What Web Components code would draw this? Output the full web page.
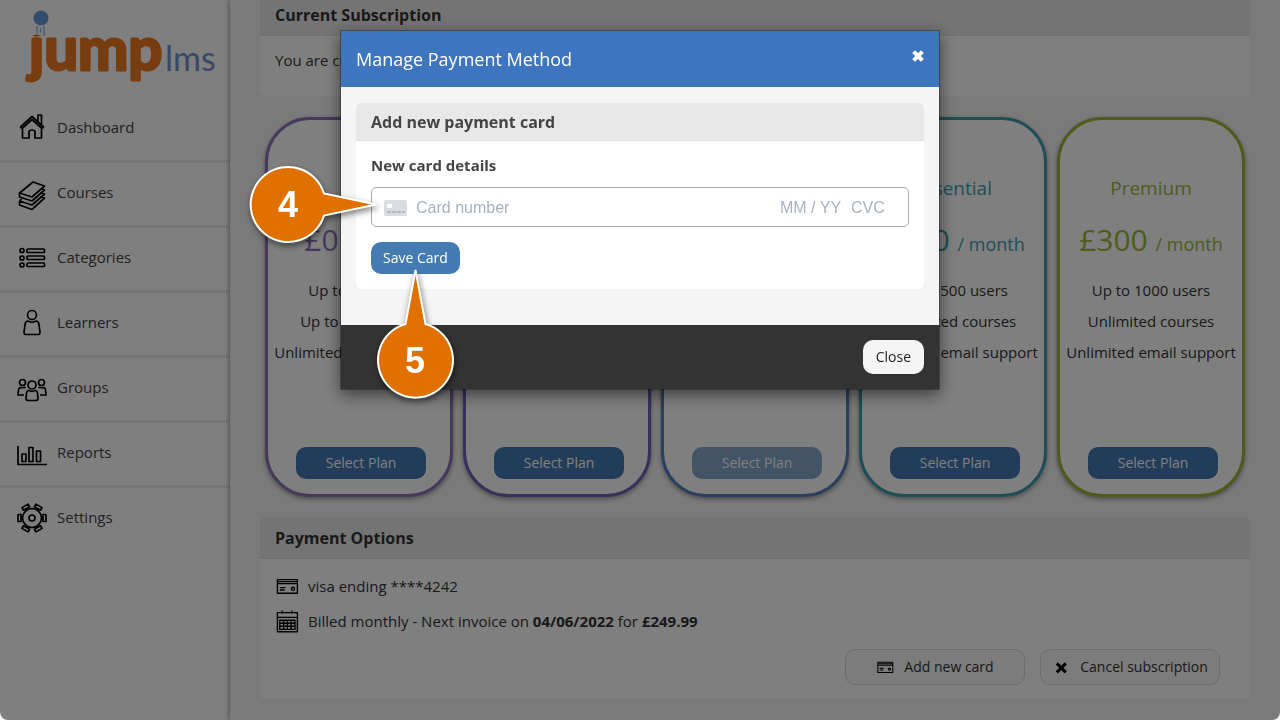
<!DOCTYPE html>
<html lang="en">
    <head>
        <meta charset="UTF-8">
        <meta name="viewport" content="width=device-width, initial-scale=1">
        <title>Manage Payment Method</title>
        <style>
            body {
                margin: 0;
                background: #f5f5f5;
                color: #333;
                font: 15px/20px "Open Sans", "Noto Sans", sans-serif;
            }
            .page { display: flex; height: 100vh; overflow: hidden; }
            main {
                flex: 1;
                min-width: 0;
                padding: 0 30px 20px;
                box-shadow: 0 0 6px rgba(0, 0, 0, .5);
            }
            /* page is scrolled down a little */
            .current { margin-top: -6px; }
            .note { margin: 0; padding: 5px 0 16px; }
            .plans {
                display: grid;
                grid-template-columns: repeat(5, 1fr);
                gap: 10px;
                padding: 21px 5px 20px;
            }
            .row { display: flex; align-items: center; gap: 9px; height: 35px; }
            .actions { display: flex; justify-content: flex-end; gap: 15px; padding: 11px 15px 4px; }
        </style>
    </head>
    <body>

        <div class="page">
            <side-nav>
                <nav-item icon="home">Dashboard</nav-item>
                <nav-item icon="books">Courses</nav-item>
                <nav-item icon="list">Categories</nav-item>
                <nav-item icon="person">Learners</nav-item>
                <nav-item icon="group">Groups</nav-item>
                <nav-item icon="chart">Reports</nav-item>
                <nav-item icon="gear">Settings</nav-item>
            </side-nav>

            <main>
                <panel-box class="current">
                    <span slot="title">Current Subscription</span>
                    <p class="note">You are currently</p>
                </panel-box>

                <div class="plans">
                    <plan-card price="£0" style="--plan: #8e72b8">
                        <span slot="name">Free</span>
                        <li>Up to 10 users</li>
                        <li>Up to 10 courses</li>
                        <li>Unlimited email support</li>
                    </plan-card>
                    <plan-card style="--plan: #6c66b4"></plan-card>
                    <plan-card style="--plan: #5580bb" disabled></plan-card>
                    <plan-card price="£200" style="--plan: #3f9cae">
                        <span slot="name">Essential</span>
                        <li>Up to 500 users</li>
                        <li>Unlimited courses</li>
                        <li>Unlimited email support</li>
                    </plan-card>
                    <plan-card price="£300" style="--plan: #9db636">
                        <span slot="name">Premium</span>
                        <li>Up to 1000 users</li>
                        <li>Unlimited courses</li>
                        <li>Unlimited email support</li>
                    </plan-card>
                </div>

                <panel-box>
                    <span slot="title">Payment Options</span>
                    <div class="row"><line-icon name="card"></line-icon>visa ending ****4242</div>
                    <div class="row"><line-icon name="calendar"></line-icon><span>Billed monthly - Next invoice on <b>04/06/2022</b> for <b>£249.99</b></span></div>
                    <div class="actions">
                        <app-button kind="outline"><line-icon name="card" style="--size: 18px"></line-icon>Add new card</app-button>
                        <app-button kind="outline"><line-icon name="cross" style="--size: 18px"></line-icon>Cancel subscription</app-button>
                    </div>
                </panel-box>
            </main>
        </div>

        <payment-modal>
            <span slot="title">Manage Payment Method</span>
            <panel-box compact>
                <span slot="title">Add new payment card</span>
                <card-form></card-form>
            </panel-box>
            <app-button slot="footer" kind="light">Close</app-button>
            <step-callout slot="callout" point="right" style="left: -94px; top: 132px">4</step-callout>
            <step-callout slot="callout" point="up" style="left: 33px; top: 236px">5</step-callout>
        </payment-modal>

        <template id="logo-template">
            <style>
                :host { display: block; }
                svg { display: block; }
                text { font-family: Lato, "Open Sans", sans-serif; }
            </style>
            <svg width="230" height="98" viewBox="0 0 230 98" role="img" aria-label="jump lms">
                <!-- the ball stands in for the dot of the j -->
                <defs><clipPath id="below"><rect x="0" y="35" width="230" height="63"/></clipPath></defs>
                <circle cx="41" cy="18" r="7.500" fill="#669be0"/>
                <path d="M37 26v10M40.500 28v5M44 26v10" stroke="#86aadc" stroke-width="1.200"/>
                <text x="29" y="70" font-size="60" font-weight="700" fill="#ee7a20" stroke="#ee7a20" stroke-width="3" stroke-linejoin="round" clip-path="url(#below)">jump</text>
                <text x="165" y="71" font-size="34" fill="#7090cc">lms</text>
            </svg>
        </template>

        <template id="nav-template">
            <style>
                :host {
                    display: block;
                    flex: none;
                    width: 230px;
                    background: #fff;
                }
            </style>
            <jump-logo></jump-logo>
            <nav><slot></slot></nav>
        </template>

        <template id="nav-item-template">
            <style>
                :host { display: block; border-bottom: 3px solid #ededed; }
                :host(:last-child) { border-bottom: 0; }
                a {
                    display: flex;
                    align-items: center;
                    gap: 10px;
                    box-sizing: border-box;
                    height: 62px;
                    padding: 0 0 4px 17px;
                    color: #444;
                    text-decoration: none;
                }
                line-icon { --size: 30px; }
            </style>
            <a href="#"><line-icon></line-icon><slot></slot></a>
        </template>

        <template id="panel-template">
            <style>
                :host { display: block; }
                h2 {
                    margin: 0;
                    padding: 11px 15px 10px;
                    background: #e8e8e8;
                    border-bottom: 1px solid #e0e0e0;
                    border-radius: 6px 6px 0 0;
                    font-size: 16px;
                    line-height: 20px;
                    font-weight: 700;
                }
                .body { padding: 9px 15px 10px; background: #fff; border-radius: 0 0 6px 6px; }
                :host([compact]) h2 { padding: 9px 15px 8px; color: #444; }
                :host([compact]) .body { padding: 14px 15px 15px; }
            </style>
            <h2><slot name="title"></slot></h2>
            <div class="body"><slot></slot></div>
        </template>

        <template id="plan-template">
            <style>
                :host {
                    display: flex;
                    flex-direction: column;
                    align-items: center;
                    box-sizing: border-box;
                    min-height: 380px;
                    padding: 56px 0 15px;
                    border: 3px solid var(--plan);
                    border-radius: 45px;
                    background: #fff;
                    box-shadow: 0 2px 5px rgba(0, 0, 0, .4);
                    text-align: center;
                    white-space: nowrap;
                }
                h3 { margin: 0 0 18px; font-size: 19px; line-height: 24px; font-weight: 400; color: var(--plan); }
                .price { margin-bottom: 13px; font-size: 30px; line-height: 44px; color: var(--plan); }
                .price small { font-size: 18px; line-height: 20px; }
                ul { margin: 0; padding: 0; list-style: none; line-height: 31px; }
                app-button { margin: auto 0 0 4px; }
            </style>
            <h3><slot name="name"></slot></h3>
            <div class="price"></div>
            <ul><slot></slot></ul>
            <app-button kind="plan">Select Plan</app-button>
        </template>

        <template id="button-template">
            <style>
                :host { display: inline-block; }
                button {
                    display: flex;
                    align-items: center;
                    justify-content: center;
                    gap: 10px;
                    height: 32px;
                    margin: 0;
                    padding: 0 12px;
                    border: 0;
                    border-radius: 10px;
                    background: #457bb3;
                    color: #fff;
                    font: inherit;
                    font-size: 14px;
                    white-space: nowrap;
                    cursor: pointer;
                }
                :host([kind="plan"]) button { width: 130px; }
                :host([kind="outline"]) button {
                    width: 180px;
                    height: 36px;
                    border: 1px solid #d8d8d8;
                    background: #f9f9f9;
                    color: #333;
                }
                :host([kind="light"]) button { height: 34px; padding: 0 13px; background: #f5f5f5; color: #222; }
                button:disabled { opacity: .65; }
            </style>
            <button type="button"><slot></slot></button>
        </template>

        <template id="form-template">
            <style>
                :host { display: block; }
                label { display: block; margin-bottom: 12px; color: #444; font-weight: 700; }
                .field {
                    display: flex;
                    align-items: center;
                    box-sizing: border-box;
                    height: 40px;
                    margin-bottom: 15px;
                    padding: 2px 12px 0;
                    border: 1px solid #aaa;
                    border-radius: 5px;
                }
                svg { flex: none; margin-right: 9px; }
                input {
                    min-width: 0;
                    padding: 0;
                    border: 0;
                    outline: 0;
                    background: none;
                    color: #333;
                    font: 16px/20px "Liberation Sans", Arial, sans-serif;
                }
                input::placeholder { color: #a9b3bd; opacity: 1; }
                .number { flex: 1; }
                .date { width: 71px; }
                .cvc { width: 45px; }
            </style>
            <label for="number">New card details</label>
            <div class="field">
                <svg width="23" height="16" viewBox="0 0 23 16" aria-hidden="true">
                    <rect width="23" height="16" rx="2" fill="#d9dce0"/>
                    <rect x="3" y="4" width="5" height="4" rx="1" fill="#fff"/>
                    <path d="M3 12h4M8 12h4M13 12h4M18 12h3" stroke="#b3b9c0" stroke-width="2"/>
                </svg>
                <input class="number" id="number" placeholder="Card number">
                <input class="date" aria-label="Expiry date" placeholder="MM / YY">
                <input class="cvc" aria-label="CVC" placeholder="CVC">
            </div>
            <app-button>Save Card</app-button>
        </template>

        <template id="modal-template">
            <style>
                :host {
                    position: fixed;
                    inset: 0;
                    padding: 30px 20px;
                    background: rgba(0, 0, 0, .5);
                    border-radius: 0 0 8px 8px;
                }
                .dialog {
                    position: relative;
                    box-sizing: border-box;
                    max-width: 600px;
                    margin: 0 auto;
                    border: 1px solid rgba(0, 0, 0, .3);
                    background: #f5f5f5;
                    background-clip: padding-box;
                    box-shadow: 0 5px 15px rgba(0, 0, 0, .5);
                }
                header {
                    display: flex;
                    justify-content: space-between;
                    padding: 15px;
                    background: #3d75bf;
                    color: #fff;
                }
                h1 { margin: 0; font-size: 18px; line-height: 26px; font-weight: 400; }
                header button { display: block; width: 12px; height: 20px; margin: 0; padding: 0; border: 0; background: none; cursor: pointer; }
                header svg { display: block; }
                .body { padding: 16px 15px 36px; }
                footer { display: flex; justify-content: flex-end; padding: 15px; background: #333; }
            </style>
            <div class="dialog" role="dialog" aria-modal="true">
                <header>
                    <h1><slot name="title"></slot></h1>
                    <button type="button" aria-label="Close"><svg width="12" height="20" viewBox="0 0 12 20"><path d="M3 7l6 6M9 7l-6 6" stroke="#fff" stroke-width="4" stroke-linecap="square"/></svg></button>
                </header>
                <div class="body"><slot></slot></div>
                <footer><slot name="footer"></slot></footer>
                <slot name="callout"></slot>
            </div>
        </template>

        <script>
            // line icons, 30x30 grid
            const ICONS = {
                home: '<path d="M3.500 15L15 4.500 26.500 15l-1.500 1.500L15 7.500 5 16.500z"/><path d="M5.500 16.500V26H12v-6q0-2 3-2t3 2v6h6.500v-9.500M21 9.500V3h3.500v9.500"/>',
                books: '<path d="M2.500 16L16 5l11.500 4L15 20z"/><path d="M2.500 16v4L15 24l12.500-11-3-1M2.500 24L15 28l12.500-11-3-1M2.500 24v4L15 32.500 27.500 21l-3-1M2.500 24l2-2"/>',
                list: '<circle cx="5" cy="8.500" r="2"/><circle cx="5" cy="16" r="2"/><circle cx="5" cy="23" r="2"/><rect x="10" y="7" width="17.500" height="3.500" rx="1"/><rect x="10" y="14" width="17.500" height="3.500" rx="1"/><rect x="10" y="21" width="17.500" height="3.500" rx="1"/>',
                person: '<circle cx="15" cy="8" r="4.500"/><path d="M11 14q4 2.500 8 0 3 .5 3 4l1 7q0 2.500-2 2.500H9q-2 0-2-2.500l1-7q0-3.500 3-4z"/>',
                group: '<g transform="translate(0 3)"><circle cx="15" cy="10" r="4"/><path d="M11.500 15.500q3.500 1.500 7 0 2 .5 2 3l.5 5q0 2-2 2h-8q-2 0-2-2l.5-5q0-2.500 2-3z"/><circle cx="5.500" cy="7.500" r="3"/><circle cx="24.500" cy="7.500" r="3"/><path d="M8.500 13q-1-1-2-.5-1.500.5-3 0Q2 12.500 1.500 15L1 20h6M21.500 13q1-1 2-.5 1.500.5 3 0 1.500 0 2 2.500l.5 5h-6"/></g>',
                chart: '<path d="M1 9v18.500h29M5 17h4v7.500H5zM12 10.500h4v14h-4zM19.500 14h4v10.500h-4z"/>',
                gear: '<g transform="translate(0 1)"><circle cx="15" cy="15" r="9.500"/><circle cx="15" cy="15" r="3"/><path d="M1 11.500h3v7H1zM26 11.500h3v7h-3z"/><path d="M1 11.500h3v7H1zM26 11.500h3v7h-3z" transform="rotate(60 15 15)"/><path d="M1 11.500h3v7H1zM26 11.500h3v7h-3z" transform="rotate(120 15 15)"/></g>',
                card: '<path d="M3 7h25v17H3zM3 12h25M3 9.500h25M6 17h7M6 20h6"/><circle cx="22.500" cy="18.500" r="2"/>',
                calendar: '<path d="M3 4.500h25v24H3zM3 10.500h25M9 2v4M21 2v4M6 14h19v11.500H6zM6 17.800h19M6 21.600h19M10.800 14v11.500M15.500 14v11.500M20.200 14v11.500"/>',
                cross: '<path d="M8 9l15 15M23 9L8 24" stroke-width="5"/>'
            };

            // clone a template into an open shadow root
            function render(el, id) {
                const root = el.attachShadow({mode : 'open'});
                root.append(document.getElementById(id).content.cloneNode(true));
                return root;
            }

            class LineIcon extends HTMLElement {
                connectedCallback() {
                    const root = this.shadowRoot || this.attachShadow({mode : 'open'});
                    root.innerHTML = `
                        <style>
                            :host { display: block; flex: none; width: var(--size, 24px); height: var(--size, 24px); }
                            svg { display: block; width: 100%; height: 100%; overflow: visible; }
                        </style>
                        <svg viewBox="0 0 30 30" fill="none" stroke="#000" stroke-width="1.700" stroke-linejoin="round" aria-hidden="true">${ICONS[this.getAttribute('name')] || ''}</svg>
                    `;
                }
            }

            class JumpLogo extends HTMLElement {
                constructor() {
                    super();
                    render(this, 'logo-template');
                }
            }

            class SideNav extends HTMLElement {
                constructor() {
                    super();
                    render(this, 'nav-template');
                }
            }

            class NavItem extends HTMLElement {
                connectedCallback() {
                    const root = render(this, 'nav-item-template');
                    const icon = document.createElement('line-icon');
                    icon.setAttribute('name', this.getAttribute('icon'));
                    root.querySelector('line-icon').replaceWith(icon);
                }
            }

            class PanelBox extends HTMLElement {
                constructor() {
                    super();
                    render(this, 'panel-template');
                }
            }

            class AppButton extends HTMLElement {
                connectedCallback() {
                    if (this.shadowRoot) return;
                    const root = render(this, 'button-template');
                    root.querySelector('button').disabled = this.hasAttribute('disabled');
                }
            }

            class PlanCard extends HTMLElement {
                connectedCallback() {
                    const root = render(this, 'plan-template');
                    const price = this.getAttribute('price');
                    if (price) {
                        root.querySelector('.price').innerHTML = `${price} <small>/ month</small>`;
                    }
                    if (this.hasAttribute('disabled')) {
                        const button = root.querySelector('app-button');
                        button.setAttribute('disabled', '');
                        if (button.shadowRoot) button.shadowRoot.querySelector('button').disabled = true;
                    }
                }
            }

            class CardForm extends HTMLElement {
                constructor() {
                    super();
                    render(this, 'form-template');
                }
            }

            class PaymentModal extends HTMLElement {
                constructor() {
                    super();
                    render(this, 'modal-template');
                }
            }

            // numbered bubble with a pointer, floats over the dialog
            class StepCallout extends HTMLElement {
                connectedCallback() {
                    const up = this.getAttribute('point') === 'up';
                    const size = up ? [84, 136] : [134, 84];
                    const path = up
                        ? 'M31.500 57L41.500 3L51.500 57A37.500 37.500 0 1 1 31.500 57z'
                        : 'M77 30.500A37.500 37.500 0 1 0 77 52.500L129 41.500z';
                    this.attachShadow({mode : 'open'}).innerHTML = `
                        <style>
                            :host { position: absolute; }
                            svg { display: block; overflow: visible; filter: drop-shadow(1px 3px 3px rgba(0, 0, 0, .5)); }
                            text { font: 700 36px "Liberation Sans", Arial, sans-serif; }
                        </style>
                        <svg width="${size[0]}" height="${size[1]}">
                            <path d="${path}" fill="#e07000" stroke="#fff" stroke-width="2"/>
                            <text x="41" y="${up ? 106 : 54}" text-anchor="middle" fill="#fff">${this.textContent}</text>
                        </svg>
                    `;
                }
            }

            customElements.define('line-icon', LineIcon);
            customElements.define('jump-logo', JumpLogo);
            customElements.define('side-nav', SideNav);
            customElements.define('nav-item', NavItem);
            customElements.define('panel-box', PanelBox);
            customElements.define('app-button', AppButton);
            customElements.define('plan-card', PlanCard);
            customElements.define('card-form', CardForm);
            customElements.define('payment-modal', PaymentModal);
            customElements.define('step-callout', StepCallout);
        </script>

    </body>
</html>
